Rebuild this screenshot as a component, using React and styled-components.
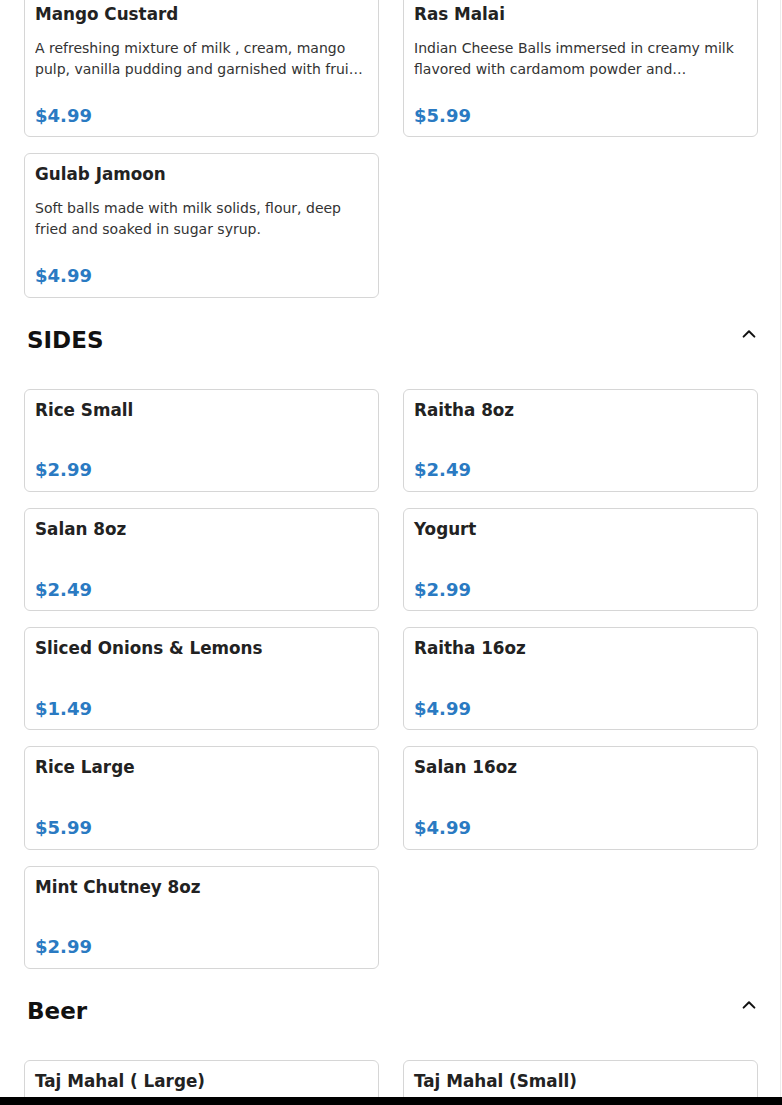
import React from "react";
import styled, { createGlobalStyle } from "styled-components";

const GlobalStyle = createGlobalStyle`
  html, body {
    margin: 0;
    padding: 0;
    background: #ffffff;
  }
  body {
    font-family: "DejaVu Sans", "Liberation Sans", sans-serif;
    color: #1f1f1f;
    overflow: hidden;
  }
  * { box-sizing: border-box; }
`;

const Page = styled.main`
  width: 781px;
  min-height: 1105px;
  border-right: 1px solid #ececec;
  padding: 0 22px 40px 24px;
`;

const Section = styled.section`
  display: flex;
  flex-direction: column;
`;

const SectionHeader = styled.header`
  display: flex;
  justify-content: space-between;
  align-items: flex-start;
  padding: 0 2px 0 3px;
  margin: 28px 0 35px;
`;

const SectionTitle = styled.h2`
  margin: 0;
  font-size: 23px;
  line-height: 28px;
  font-weight: 700;
  color: #111111;
`;

const Toggle = styled.button`
  display: flex;
  width: 14px;
  height: 14px;
  margin-top: 1px;
  padding: 0;
  border: none;
  background: transparent;
  color: #111111;
  cursor: pointer;
`;

const Grid = styled.div`
  display: grid;
  grid-template-columns: 1fr 1fr;
  column-gap: 24px;
  row-gap: 16px;
  margin-top: ${(p) => (p.$offset ? `${p.$offset}px` : "0")};
`;

const Card = styled.article`
  display: flex;
  flex-direction: column;
  border: 1px solid #d6d6d6;
  border-radius: 6px;
  padding: 10px;
  background: #ffffff;
`;

const ItemName = styled.h3`
  margin: 0;
  font-size: 16.8px;
  line-height: 20.8px;
  font-weight: 700;
  color: #222222;
`;

const ItemDesc = styled.p`
  margin: 13px 0 0;
  font-size: 14px;
  line-height: 21px;
  color: #333333;
  display: -webkit-box;
  -webkit-line-clamp: 2;
  -webkit-box-orient: vertical;
  overflow: hidden;
`;

const Price = styled.div`
  margin-top: ${(p) => (p.$hasDesc ? "25px" : "38.8px")};
  font-size: 18px;
  line-height: 21.6px;
  font-weight: 700;
  color: #2a7ac2;
`;

const BottomBar = styled.div`
  position: fixed;
  left: 0;
  right: 0;
  bottom: 0;
  height: 8px;
  background: #000000;
`;

const ChevronUp = () => (
  <svg width="14" height="14" viewBox="0 0 14 14" fill="none">
    <polyline
      points="1.6,9.6 7,4.2 12.4,9.6"
      stroke="currentColor"
      strokeWidth="2"
      strokeLinecap="round"
      strokeLinejoin="round"
    />
  </svg>
);

const desserts = [
  {
    name: "Mango Custard",
    desc: "A refreshing mixture of milk , cream, mango pulp, vanilla pudding and garnished with fruits and nuts.",
    price: "$4.99",
  },
  {
    name: "Ras Malai",
    desc: "Indian Cheese Balls immersed in creamy milk flavored with cardamom powder and…",
    price: "$5.99",
  },
  {
    name: "Gulab Jamoon",
    desc: "Soft balls made with milk solids, flour, deep fried and soaked in sugar syrup.",
    price: "$4.99",
  },
];

const sides = [
  { name: "Rice Small", price: "$2.99" },
  { name: "Raitha 8oz", price: "$2.49" },
  { name: "Salan 8oz", price: "$2.49" },
  { name: "Yogurt", price: "$2.99" },
  { name: "Sliced Onions & Lemons", price: "$1.49" },
  { name: "Raitha 16oz", price: "$4.99" },
  { name: "Rice Large", price: "$5.99" },
  { name: "Salan 16oz", price: "$4.99" },
  { name: "Mint Chutney 8oz", price: "$2.99" },
];

const beer = [
  { name: "Taj Mahal ( Large)", price: "$7.99" },
  { name: "Taj Mahal (Small)", price: "$4.99" },
];

const MenuCard = ({ item }) => (
  <Card>
    <ItemName>{item.name}</ItemName>
    {item.desc && <ItemDesc>{item.desc}</ItemDesc>}
    <Price $hasDesc={!!item.desc}>{item.price}</Price>
  </Card>
);

const MenuSection = ({ title, items }) => (
  <Section>
    <SectionHeader>
      <SectionTitle>{title}</SectionTitle>
      <Toggle aria-label="Collapse section">
        <ChevronUp />
      </Toggle>
    </SectionHeader>
    <Grid>
      {items.map((it) => (
        <MenuCard key={it.name} item={it} />
      ))}
    </Grid>
  </Section>
);

export default function App() {
  return (
    <>
      <GlobalStyle />
      <Page>
        <Grid $offset={-7}>
          {desserts.map((it) => (
            <MenuCard key={it.name} item={it} />
          ))}
        </Grid>
        <MenuSection title="SIDES" items={sides} />
        <MenuSection title="Beer" items={beer} />
      </Page>
      <BottomBar />
    </>
  );
}
